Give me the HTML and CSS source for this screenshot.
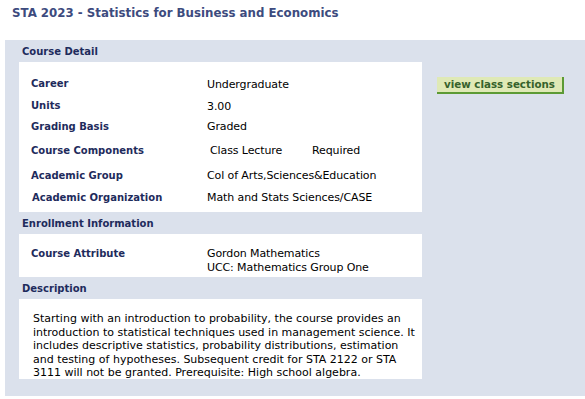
FILE: index.html
```html
<!DOCTYPE html>
<html>
<head>
<meta charset="utf-8">
<link rel="stylesheet" href="styles.css">
</head>
<body>
<h1 class="title">STA 2023 - Statistics for Business and Economics</h1>
<div class="panel">
  <div class="main">
    <div class="sec-head">Course Detail</div>
    <div class="box detail">
      <div class="lbl">Career</div><div class="val v-low">Undergraduate</div>
      <div class="lbl">Units</div><div class="val v-low">3.00</div>
      <div class="lbl">Grading Basis</div><div class="val">Graded</div>
      <div class="lbl">Course Components</div><div class="val comp"><span class="c1">Class Lecture</span><span>Required</span></div>
      <div class="lbl">Academic Group</div><div class="val">Col of Arts,Sciences&amp;Education</div>
      <div class="lbl org">Academic Organization</div><div class="val">Math and Stats Sciences/CASE</div>
    </div>
    <div class="sec-head">Enrollment Information</div>
    <div class="box enroll">
      <div class="lbl">Course Attribute</div>
      <div class="val">Gordon Mathematics<br>UCC: Mathematics Group One</div>
    </div>
    <div class="sec-head">Description</div>
    <div class="box desc">Starting with an introduction to probability, the course provides an introduction to statistical techniques used in management science. It includes descriptive statistics, probability distributions, estimation and testing of hypotheses. Subsequent credit for STA 2122 or STA 3111 will not be granted. Prerequisite: High school algebra.</div>
  </div>
  <div class="side">
    <a class="btn">view class sections</a>
  </div>
</div>
</body>
</html>
```
FILE: styles.css
```css
html, body {
  margin: 0;
  padding: 0;
  background: #fff;
}
body {
  font-family: "DejaVu Sans", Verdana, sans-serif;
  font-size: 11px;
  letter-spacing: -0.1px;
  color: #000;
  width: 585px;
  height: 399px;
  overflow: hidden;
}
.title {
  margin: 0;
  padding: 6px 0 0 12px;
  height: 40px;
  box-sizing: border-box;
  font-size: 11.8px;
  letter-spacing: 0;
  font-weight: bold;
  color: #3d4b7e;
  line-height: 14px;
}
.panel {
  margin-left: 5px;
  background: #dbe1ec;
  height: 356px;
  display: flex;
  padding-left: 14px;
}
.main {
  width: 403px;
  display: flex;
  flex-direction: column;
}
.sec-head {
  height: 22px;
  padding-top: 1px;
  box-sizing: border-box;
  line-height: 22px;
  padding-left: 3px;
  font-size: 10px;
  letter-spacing: 0;
  font-weight: bold;
  color: #1e2b5c;
}
.box {
  background: #fff;
  box-sizing: border-box;
}
.lbl {
  font-size: 10px;
  letter-spacing: 0;
  font-weight: bold;
  color: #1e2b5c;
}
.detail {
  height: 150px;
  padding: 10px 0 0 12px;
  display: grid;
  grid-template-columns: 176px 1fr;
  grid-template-rows: 22px 22px 21px 26px 24px 20px;
  align-items: center;
}
.detail .lbl, .detail .val {
  line-height: 13px;
}
.v-low {
  padding-top: 3px;
}
.org {
  padding-left: 1px;
}
.comp {
  display: flex;
  padding-left: 3px;
}
.comp .c1 {
  width: 102px;
}
.enroll {
  height: 43px;
  padding: 13px 0 0 12px;
  display: grid;
  grid-template-columns: 176px 1fr;
  line-height: 13.6px;
}
.desc {
  height: 80px;
  padding: 13px 1px 0 14px;
  line-height: 13.5px;
  letter-spacing: 0;
}
.side {
  padding: 37px 0 0 15px;
}
.btn {
  display: block;
  width: 127px;
  box-sizing: border-box;
  text-align: center;
  background: #dfe9b6;
  color: #36622c;
  font-size: 10.3px;
  letter-spacing: 0;
  font-weight: bold;
  height: 17px;
  line-height: 15px;
  border-right: 2px solid #5c9a35;
  border-bottom: 2px solid #5c9a35;
  white-space: nowrap;
}
```
